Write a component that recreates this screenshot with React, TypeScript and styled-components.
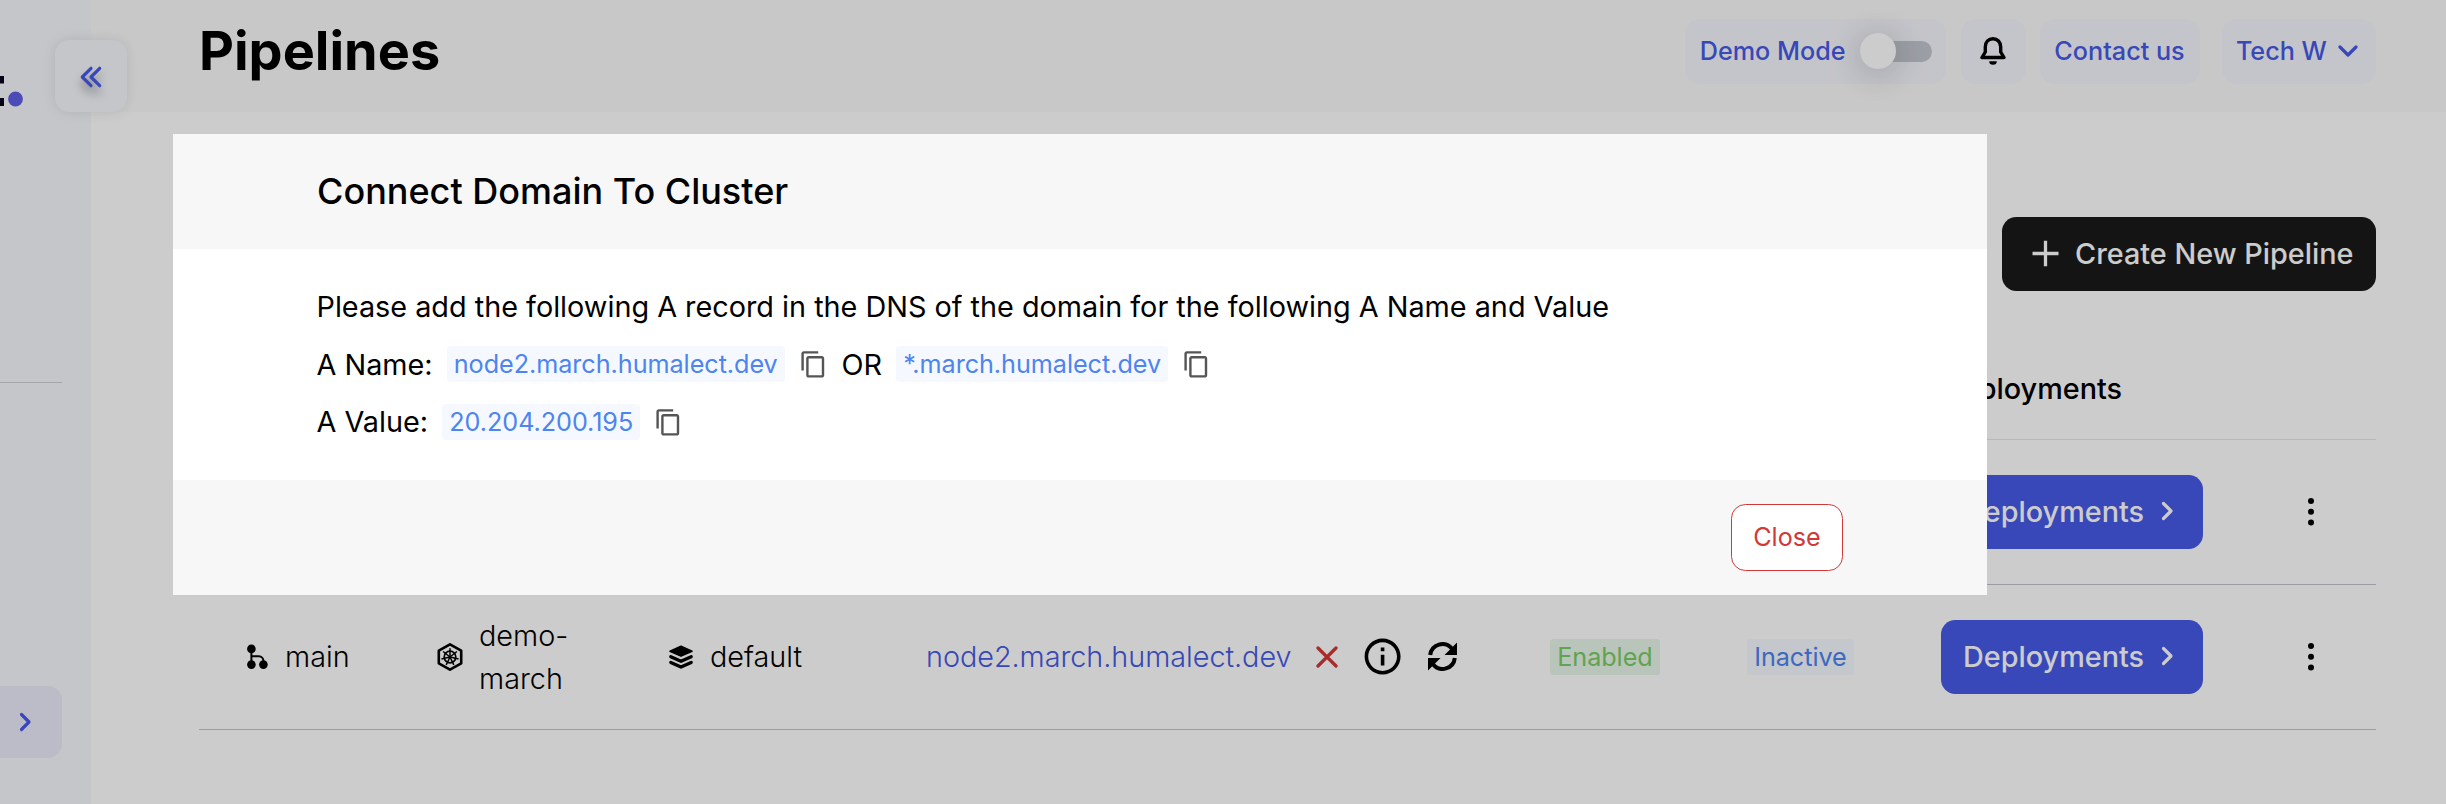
import React from "react";
import styled, { createGlobalStyle } from "styled-components";
import { MdContentCopy, MdInfoOutline } from "react-icons/md";

const GlobalStyle = createGlobalStyle`
  *, *::before, *::after { box-sizing: border-box; }
  body {
    margin: 0;
    overflow: hidden;
    background: #fff;
    color: #000;
    font-family: Inter, "Liberation Sans", sans-serif;
    font-size: 28.8px;
    line-height: 43.2px;
  }
  button { font-family: inherit; margin: 0; border: 0; }
  svg { display: block; flex: none; }
`;

const indigo = "#465ae6";

const Page = styled.div`
  display: flex;
  width: 2446px;
  height: 804px;
  overflow: hidden;
`;

const Sidebar = styled.aside`
  position: relative;
  width: 91px;
  flex: none;
  display: flex;
  flex-direction: column;
  align-items: flex-start;
  background: #f6f8fd;
  z-index: 1;
`;

const Logo = styled.div`
  height: 382px;
  padding-top: 75px;
`;

const SidebarRule = styled.div`
  width: 62px;
  height: 1px;
  background: #cdced3;
`;

const ActiveItem = styled.div`
  display: flex;
  align-items: center;
  width: 62px;
  height: 72px;
  margin-top: 303px;
  padding-left: 18px;
  border-radius: 0 14.4px 14.4px 0;
  background: #ebebfb;
`;

const CollapseButton = styled.button`
  position: absolute;
  left: 55px;
  top: 40px;
  width: 72px;
  height: 72px;
  padding: 1px 1px 0 0;
  display: flex;
  align-items: center;
  justify-content: center;
  border-radius: 14.4px;
  background: #f6f8fd;
  box-shadow: 0 0 14px rgba(0, 0, 0, 0.1);
  svg { filter: drop-shadow(0 7px 5px rgba(0, 0, 0, 0.35)); }
`;

const Main = styled.main`
  flex: 1;
  display: flex;
  flex-direction: column;
`;

const TopBar = styled.header`
  display: flex;
  justify-content: space-between;
  height: 112px;
  padding: 19px 70px 0 108px;
  background: #fbfbfb;
`;

const Title = styled.h1`
  margin: 0;
  font-size: 54px;
  line-height: 64.8px;
  font-weight: 700;
`;

const Actions = styled.div`
  display: flex;
  align-items: flex-start;
`;

const Chip = styled.div<{ $width: number; $gap?: number }>`
  display: flex;
  align-items: center;
  width: ${(p) => p.$width}px;
  height: 64.8px;
  margin-left: ${(p) => p.$gap ?? 14.4}px;
  padding: 0 14.4px;
  border-radius: 14.4px;
  background: #f6f7fd;
  color: ${indigo};
  font-size: 25.2px;
  font-weight: 500;
  white-space: nowrap;
`;

const Switch = styled.div`
  display: flex;
  align-items: center;
  width: 72px;
  height: 21.6px;
  margin-left: auto;
  border-radius: 10.8px;
  background: #c3c8d0;
`;

const Knob = styled.div`
  width: 36px;
  height: 36px;
  border-radius: 50%;
  background: #fff;
  box-shadow: 0 4px 36px rgba(0, 0, 0, 0.25);
`;

const Toolbar = styled.div`
  display: flex;
  justify-content: flex-end;
  padding: 105px 70px 0 0;
`;

const SolidButton = styled.button<{ $tone: string; $width: number }>`
  display: flex;
  align-items: center;
  width: ${(p) => p.$width}px;
  height: 74px;
  padding: 0 22.6px 1.5px 22px;
  border-radius: 14.4px;
  background: ${(p) => p.$tone};
  color: #fff;
  font-size: 28.8px;
  font-weight: 500;
  white-space: nowrap;
`;

const CreateLabel = styled.span`
  margin-left: auto;
`;

const Table = styled.div`
  display: flex;
  flex-direction: column;
  width: 2177px;
  margin: 48px 0 0 108px;
`;

const Row = styled.div<{ $height: number; $line: string }>`
  display: grid;
  grid-template-columns: 190px 231px 258px 624px 197px 194px 366px 1fr;
  align-items: center;
  height: ${(p) => p.$height}px;
  padding-left: 48px;
  border-bottom: 1px solid ${(p) => p.$line};
`;

const Cell = styled.div<{ $column?: number; $weight?: number }>`
  grid-column: ${(p) => p.$column ?? "auto"};
  display: flex;
  align-items: center;
  font-weight: ${(p) => p.$weight ?? 300};
`;

const IconSlot = styled.span<{ $width: number; $center?: boolean }>`
  display: flex;
  flex: none;
  justify-content: ${(p) => (p.$center ? "center" : "flex-start")};
  width: ${(p) => p.$width}px;
`;

const ClusterName = styled.span`
  width: 120px;
`;

const DomainLink = styled.a`
  color: ${indigo};
  width: 390px;
  letter-spacing: -0.04px;
`;

const Badge = styled.span<{ $tone: "green" | "blue" }>`
  display: inline-flex;
  align-items: center;
  height: 36px;
  padding: 1px 7.2px 0;
  border-radius: 3.6px;
  font-size: 25.2px;
  font-weight: 400;
  letter-spacing: -0.04px;
  white-space: nowrap;
  color: ${(p) => (p.$tone === "green" ? "#7acc64" : "#4d84f0")};
  background: ${(p) => (p.$tone === "green" ? "#e8f7ea" : "#f5f9ff")};
`;

const Backdrop = styled.div`
  position: fixed;
  inset: 0;
  z-index: 5;
  display: flex;
  align-items: flex-start;
  padding: 134px 0 0 173px;
  background: rgba(0, 0, 0, 0.2);
`;

const Dialog = styled.section`
  display: flex;
  flex-direction: column;
  width: 1814px;
  background: #fff;
`;

const DialogHeader = styled.h2`
  display: flex;
  align-items: center;
  height: 115px;
  margin: 0;
  padding: 0 144px;
  background: #f7f7f7;
  font-size: 36px;
  font-weight: 500;
`;

const DialogBody = styled.div`
  height: 231px;
  padding: 29px 144px 0 143.5px;
`;

const RecordLine = styled.div`
  display: flex;
  align-items: center;
  gap: 13.9px;
  height: 57.6px;
  white-space: nowrap;
`;

const DialogFooter = styled.footer`
  display: flex;
  align-items: center;
  justify-content: flex-end;
  height: 115px;
  padding: 0 144px;
  background: #f7f7f7;
`;

const CloseButton = styled.button`
  width: 112px;
  height: 67px;
  padding: 0 0 1px;
  border: 1px solid #d23838;
  border-radius: 14.4px;
  background: #fff;
  color: #d23838;
  font-size: 25.2px;
  font-weight: 400;
`;

const ChevronRight = ({ color = "#fff" }: { color?: string }) => (
  <svg width="14" height="20" viewBox="0 0 14 20" fill="none" stroke={color} strokeWidth="3.2" strokeLinecap="round" strokeLinejoin="round">
    <path d="M3.5 2.5 11 10l-7.5 7.5" />
  </svg>
);

const ChevronDown = () => (
  <svg width="20" height="13" viewBox="0 0 20 13" fill="none" stroke={indigo} strokeWidth="3.2" strokeLinecap="round" strokeLinejoin="round">
    <path d="m2 2 8 8 8-8" />
  </svg>
);

const ChevronsLeft = () => (
  <svg width="22" height="22" viewBox="0 0 22 22" fill="none" stroke={indigo} strokeWidth="3.2" strokeLinecap="round" strokeLinejoin="round">
    <path d="M11 2.3 2.3 11l8.700 8.700M19.7 2.3 11 11l8.700 8.700" />
  </svg>
);

const LogoEnd = () => (
  <svg width="24" height="32" viewBox="0 0 24 32">
    <path d="M0 1h4v7.500H0zM0 23h4v8H0z" fill="#05051a" />
    <circle cx="15.500" cy="24" r="7.400" fill="#5e5fe6" />
  </svg>
);

const Bell = () => (
  <svg width="26" height="30" viewBox="0 0 26 30" fill="none" stroke="#000" strokeWidth="3.400" strokeLinecap="round" strokeLinejoin="round">
    <path d="M2 21.500h22L20.700 16V11c0-5-3.300-8.300-7.700-8.300S5.300 6 5.300 11v5z" />
    <path d="M9.200 25.200h7.600a3.800 3.600 0 0 1-7.600 0z" fill="#000" stroke="none" />
  </svg>
);

const Plus = () => (
  <svg width="27" height="27" viewBox="0 0 27 27" stroke="#fff" strokeWidth="3.300">
    <path d="M13.500 0.800v25.400M0.500 13.500h26" />
  </svg>
);

const Branch = () => (
  <svg width="21" height="26" viewBox="0 0 21 26">
    <path d="M4.400 5v16M4.400 12.300h7.500c2.500 0 4.500 2 4.500 4.500V20" fill="none" stroke="#000" strokeWidth="2" />
    <circle cx="4.400" cy="4.900" r="4.300" />
    <circle cx="4.400" cy="20.600" r="4.300" />
    <circle cx="16.400" cy="20.600" r="4.300" />
  </svg>
);

const Helm = () => (
  <svg width="26" height="30" viewBox="0 0 26 30" fill="none" stroke="#000">
    <path d="M13 2.300 24.200 8.700v12.600L13 27.700 1.800 21.300V8.700z" strokeWidth="2.600" strokeLinejoin="round" />
    <circle cx="13" cy="15" r="5.800" strokeWidth="1.700" />
    {[0, 1, 2, 3, 4, 5, 6].map((n) => (
      <path key={n} d="M13 15V6.200" strokeWidth="1.500" transform={`rotate(${(n * 360) / 7} 13 15)`} />
    ))}
  </svg>
);

const Layers = () => (
  <svg width="26" height="24" viewBox="0 0 26 24" strokeLinejoin="round" strokeLinecap="round">
    <path d="M13 1.300 24 6.200 13 11.100 2 6.200z" stroke="#000" strokeWidth="1.600" />
    <path d="M2.800 11.700 13 16.300l10.200-4.600M2.800 17.400 13 22l10.200-4.600" fill="none" stroke="#000" strokeWidth="3.300" />
  </svg>
);

const Cross = () => (
  <svg width="22" height="22" viewBox="0 0 22 22" stroke="#d23838" strokeWidth="3.300" strokeLinecap="round">
    <path d="m2 2 18 18M20 2 2 20" />
  </svg>
);

const Sync = () => (
  <svg width="29" height="29" viewBox="0 0 29 29">
    <path d="M2.200 13A12.300 12.300 0 0 1 24 6.700M26.800 16A12.300 12.300 0 0 1 5 22.300" fill="none" stroke="#000" strokeWidth="4" />
    <path d="M29 .5V13H16.500zM0 28.500V16h12.500z" />
  </svg>
);

const Dots = () => (
  <svg width="8" height="30" viewBox="0 0 8 30">
    <circle cx="4" cy="4" r="3" />
    <circle cx="4" cy="14.800" r="3" />
    <circle cx="4" cy="25.600" r="3" />
  </svg>
);

const CopyIcon = () => <MdContentCopy size={28.8} color="#555" />;

const StatusIcons = styled.span`
  display: flex;
  align-items: center;
  gap: 23.200px;
`;

const ArrowSlot = styled.span`
  display: flex;
  margin: 0 6px 0 auto;
`;

const PlusSlot = styled.span`
  margin-left: 8px;
`;

const DeploymentsButton = () => (
  <SolidButton $tone={indigo} $width={262}>
    Deployments
    <ArrowSlot>
      <ChevronRight />
    </ArrowSlot>
  </SolidButton>
);

export default function App() {
  return (
    <>
      <GlobalStyle />
      <Page>
        <Sidebar>
          <Logo>
            <LogoEnd />
          </Logo>
          <SidebarRule />
          <ActiveItem>
            <ChevronRight color={indigo} />
          </ActiveItem>
          <CollapseButton aria-label="Collapse sidebar">
            <ChevronsLeft />
          </CollapseButton>
        </Sidebar>
        <Main>
          <TopBar>
            <Title>Pipelines</Title>
            <Actions>
              <Chip $width={261}>
                Demo Mode
                <Switch>
                  <Knob />
                </Switch>
              </Chip>
              <Chip $width={64.8}>
                <IconSlot $width={36} $center>
                  <Bell />
                </IconSlot>
              </Chip>
              <Chip $width={160}>Contact us</Chip>
              <Chip $width={154.5} $gap={21.6}>
                <IconSlot $width={102}>Tech W</IconSlot>
                <ChevronDown />
              </Chip>
            </Actions>
          </TopBar>
          <Toolbar>
            <SolidButton $tone="#191919" $width={374}>
              <PlusSlot>
                <Plus />
              </PlusSlot>
              <CreateLabel>Create New Pipeline</CreateLabel>
            </SolidButton>
          </Toolbar>
          <Table>
            <Row $height={101} $line="#e6e6e6">
              <Cell $column={7} $weight={500}>Deployments</Cell>
            </Row>
            <Row $height={145} $line="#c3c5ce">
              <Cell $column={7}>
                <DeploymentsButton />
              </Cell>
              <Cell>
                <Dots />
              </Cell>
            </Row>
            <Row $height={145} $line="#c3c5ce">
              <Cell>
                <IconSlot $width={38}>
                  <Branch />
                </IconSlot>
                main
              </Cell>
              <Cell>
                <IconSlot $width={42}>
                  <Helm />
                </IconSlot>
                <ClusterName>demo-march</ClusterName>
              </Cell>
              <Cell>
                <IconSlot $width={42}>
                  <Layers />
                </IconSlot>
                default
              </Cell>
              <Cell>
                <DomainLink>node2.march.humalect.dev</DomainLink>
                <StatusIcons>
                  <Cross />
                  <MdInfoOutline size={43.2} />
                  <Sync />
                </StatusIcons>
              </Cell>
              <Cell>
                <Badge $tone="green">Enabled</Badge>
              </Cell>
              <Cell>
                <Badge $tone="blue">Inactive</Badge>
              </Cell>
              <Cell>
                <DeploymentsButton />
              </Cell>
              <Cell>
                <Dots />
              </Cell>
            </Row>
          </Table>
        </Main>
      </Page>
      <Backdrop>
        <Dialog>
          <DialogHeader>Connect Domain To Cluster</DialogHeader>
          <DialogBody>
            <RecordLine>
              Please add the following A record in the DNS of the domain for the following A Name and Value
            </RecordLine>
            <RecordLine>
              <span>A Name:</span>
              <Badge $tone="blue">node2.march.humalect.dev</Badge>
              <CopyIcon />
              <span>OR</span>
              <Badge $tone="blue">*.march.humalect.dev</Badge>
              <CopyIcon />
            </RecordLine>
            <RecordLine>
              <span>A Value:</span>
              <Badge $tone="blue">20.204.200.195</Badge>
              <CopyIcon />
            </RecordLine>
          </DialogBody>
          <DialogFooter>
            <CloseButton>Close</CloseButton>
          </DialogFooter>
        </Dialog>
      </Backdrop>
    </>
  );
}
